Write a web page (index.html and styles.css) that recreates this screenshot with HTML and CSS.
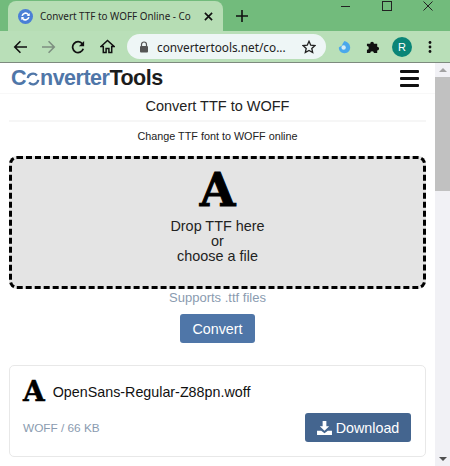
FILE: index.html
```html
<!DOCTYPE html>
<html>
<head>
    <title>Convert TTF to WOFF Online</title>
    <link rel="stylesheet" href="styles.css">
</head>
<body>
    <!-- browser tabs -->
    <div class="tabstrip">
        <div class="tab">
            <svg class="tab-icon" width="15" height="15" viewBox="0 0 16 16">
                <circle cx="8" cy="8" r="8" fill="#4a7fd6"/>
                <path d="M3.6 7.2a4.5 4.5 0 0 1 7.9-2l1-.9v3.2H9.300l1.100-1.100a3 3 0 0 0-5.200 1z" fill="#fff"/>
                <path d="M12.400 8.800a4.500 4.500 0 0 1-7.900 2l-1 .9V8.500h3.200l-1.100 1.100a3 3 0 0 0 5.200-1z" fill="#fff"/>
            </svg>
            <span class="tab-title">Convert TTF to WOFF Online - Co</span>
            <svg class="tab-close" width="9" height="9" viewBox="0 0 10 10">
                <path d="M1 1l8 8M9 1l-8 8" stroke="#111" stroke-width="1.800"/>
            </svg>
        </div>
        <svg class="new-tab" width="12" height="12" viewBox="0 0 12 12">
            <path d="M6 0v12M0 6h12" stroke="#111" stroke-width="1.600"/>
        </svg>
        <div class="window-btns">
            <svg width="10" height="10" viewBox="0 0 10 10"><path d="M0 5.500h9" stroke="#222"/></svg>
            <svg width="10" height="10" viewBox="0 0 10 10"><rect x=".5" y=".5" width="9" height="9" fill="none" stroke="#222"/></svg>
            <svg width="10" height="10" viewBox="0 0 10 10"><path d="M.5 .5l9 9M9.500 .5l-9 9" stroke="#222"/></svg>
        </div>
    </div>

    <!-- browser toolbar -->
    <div class="toolbar">
        <svg class="tool" width="14" height="14" viewBox="0 0 16 16">
            <path d="M16 8H2M8.500 1.500L2 8l6.500 6.500" fill="none" stroke="#111" stroke-width="1.800"/>
        </svg>
        <svg class="tool" width="14" height="14" viewBox="0 0 16 16">
            <path d="M0 8h14M7.500 1.500L14 8l-6.500 6.500" fill="none" stroke="#7d8f80" stroke-width="1.800"/>
        </svg>
        <svg class="tool" width="14" height="14" viewBox="0 0 16 16">
            <path d="M14 10a6.200 6.200 0 1 1-1-5.600" fill="none" stroke="#111" stroke-width="2"/>
            <path d="M15 1v6H9z" fill="#111"/>
        </svg>
        <svg class="tool" width="15" height="15" viewBox="0 0 16 16">
            <path d="M1 8l7-6.500L15 8h-2.500v6.500h-3V10h-3v4.500h-3V8z" fill="none" stroke="#111" stroke-width="1.600"/>
        </svg>
        <div class="omnibox">
            <svg width="10" height="12" viewBox="0 0 10 12">
                <path d="M2.500 5V3.500a2.500 2.500 0 0 1 5 0V5" fill="none" stroke="#555" stroke-width="1.200"/>
                <rect x="1" y="5" width="8" height="6.500" rx="1" fill="#555"/>
            </svg>
            <span class="url">convertertools.net/co...</span>
            <svg class="star" width="14" height="14" viewBox="0 0 16 16">
                <path d="M8 1.500l2 4.400 4.700.5-3.500 3.200 1 4.700L8 11.900l-4.200 2.400 1-4.700L1.300 6.400 6 5.900z" fill="none" stroke="#222" stroke-width="1.500"/>
            </svg>
        </div>
        <svg class="ext-drop" width="13" height="14" viewBox="0 0 14 16">
            <path d="M7 1c4 1 6.500 4 6.500 7.500S11 15 7 15 .5 12 .5 8.500c1-1 2-1.500 3-1.500C4.500 5 5.500 2.500 7 1z" fill="#4aa8ec"/>
            <circle cx="6" cy="8.500" r="2.500" fill="#d4ecf6"/>
        </svg>
        <svg class="ext-puzzle" width="14" height="14" viewBox="0 0 15 15">
            <path d="M1 4h3.500a2 2 0 0 1 4 0H12v3.200a2 2 0 0 1 0 4V14H8.500a2 2 0 0 0-4 0H1v-3.500a2 2 0 0 0 0-4z" fill="#111"/>
        </svg>
        <div class="avatar">R</div>
        <svg class="menu-dots" width="4" height="12" viewBox="0 0 4 12">
            <circle cx="2" cy="1.500" r="1.400" fill="#111"/>
            <circle cx="2" cy="6" r="1.400" fill="#111"/>
            <circle cx="2" cy="10.500" r="1.400" fill="#111"/>
        </svg>
    </div>

    <div class="viewport">
        <div class="page">
            <div class="navbar">
                <div class="logo">
                    <span class="logo-blue">C<svg class="logo-o" width="14" height="14" viewBox="0 0 16 16">
                        <path d="M2 7a6 6 0 0 1 10.500-3" fill="none" stroke="#4f76a8" stroke-width="2.600"/>
                        <path d="M14 9a6 6 0 0 1-10.500 3" fill="none" stroke="#4f76a8" stroke-width="2.600"/>
                    </svg>nverter</span><span class="logo-dark">Tools</span>
                </div>
                <div class="burger"><i></i><i></i><i></i></div>
            </div>

            <h1 class="title">Convert TTF to WOFF</h1>
            <p class="subtitle">Change TTF font to WOFF online</p>

            <div class="dropzone">
                <div class="font-a font-a-big">A</div>
                <div class="drop-text">Drop TTF here</div>
                <div class="drop-text">or</div>
                <div class="drop-text">choose a file</div>
            </div>

            <p class="supports">Supports .ttf files</p>
            <div class="convert-row">
                <button type="button" class="btn btn-convert">Convert</button>
            </div>

            <div class="file-card">
                <div class="file-head">
                    <span class="font-a font-a-small">A</span>
                    <span class="file-name">OpenSans-Regular-Z88pn.woff</span>
                </div>
                <div class="file-foot">
                    <span class="file-meta">WOFF / 66 KB</span>
                    <button type="button" class="btn btn-download">
                        <svg width="15" height="14" viewBox="0 0 16 15">
                            <path d="M6 0h4v5.500h3L8 10.500 3 5.500h3z" fill="#fff"/>
                            <path d="M0 10.500h4.500L8 13l3.500-2.500H16V15H0z" fill="#fff"/>
                        </svg>
                        Download
                    </button>
                </div>
            </div>
        </div>

        <div class="scrollbar">
            <div class="arrow-up"></div>
            <div class="thumb"></div>
            <div class="track"></div>
            <div class="arrow-down"></div>
        </div>
    </div>
</body>
</html>
```

FILE: styles.css
```css
html, body {
    margin: 0;
    padding: 0;
}
body {
    width: 450px;
    height: 466px;
    overflow: hidden;
    font-family: "Liberation Sans", Arial, sans-serif;
    color: #111;
    background-color: #fff;
}

/* browser tabs */
.tabstrip {
    display: flex;
    align-items: flex-end;
    height: 31px;
    padding-left: 8px;
    background-color: #72bb7c;
}
.tab {
    display: flex;
    align-items: center;
    flex: none;
    width: 215px;
    height: 30px;
    padding: 0 10px;
    box-sizing: border-box;
    background-color: #b6ddb4;
    border-radius: 8px 8px 0 0;
}
.tab-icon {
    flex: none;
}
.tab-title {
    flex: 1;
    min-width: 0;
    margin-left: 7px;
    white-space: nowrap;
    font-family: "Noto Sans", sans-serif;
    font-size: 9.9px;
    color: #222;
}
.tab-close {
    flex: none;
}
.new-tab {
    flex: none;
    margin: 0 0 9px 13px;
}
.window-btns {
    display: flex;
    gap: 31px;
    align-self: flex-start;
    margin: 1px 0 0 auto;
    padding-right: 17px;
}

/* browser toolbar */
.toolbar {
    display: flex;
    align-items: center;
    height: 31px;
    padding-left: 13px;
    background-color: #b9dfb8;
    border-bottom: 1px solid #7d8a7e;
}
.tool {
    flex: none;
    margin-right: 15px;
}
.omnibox {
    display: flex;
    align-items: center;
    flex: none;
    width: 199px;
    height: 25px;
    margin-left: -3px;
    padding: 0 10px 0 12px;
    box-sizing: border-box;
    background-color: #eef6f6;
    border-radius: 13px;
}
.url {
    margin-left: 8px;
    font-family: "Noto Sans", sans-serif;
    font-size: 11.8px;
    white-space: nowrap;
    color: #222;
}
.star {
    flex: none;
    margin-left: auto;
}
.ext-drop {
    flex: none;
    margin-left: 12px;
}
.ext-puzzle {
    flex: none;
    margin-left: 15px;
}
.avatar {
    flex: none;
    width: 20px;
    height: 20px;
    margin-left: 12px;
    border-radius: 50%;
    background-color: #0a8577;
    color: #fff;
    font-size: 11px;
    line-height: 20px;
    text-align: center;
}
.menu-dots {
    flex: none;
    margin-left: 16px;
}

/* page */
.viewport {
    display: flex;
    height: 403px;
    overflow: hidden;
}
.page {
    width: 435px;
    flex: none;
    box-sizing: border-box;
    padding: 0 9px;
}
.navbar {
    display: flex;
    align-items: center;
    justify-content: space-between;
    height: 30px;
    margin: 0 -9px;
    padding: 0 16px 0 11px;
    border-bottom: 1px solid #f8f8f8;
}
.logo {
    font-size: 21.5px;
    font-weight: bold;
    letter-spacing: -0.5px;
    white-space: nowrap;
}
.logo-blue {
    color: #4f76a8;
}
.logo-dark {
    color: #1c1c1c;
}
.logo-o {
    margin: 0 0 -1px 0;
}
.burger {
    display: flex;
    flex-direction: column;
    gap: 4px;
    width: 19px;
}
.burger i {
    display: block;
    height: 3px;
    background-color: #111;
    border-radius: 1px;
}
.title {
    margin: 0;
    padding: 3px 0 5px;
    font-size: 14.5px;
    font-weight: normal;
    line-height: 18px;
    text-align: center;
    color: #222;
    border-bottom: 2px solid #f6f6f6;
}
.subtitle {
    margin: 7px 0 13px;
    font-size: 10.8px;
    line-height: 14px;
    text-align: center;
    color: #222;
}
.dropzone {
    height: 133px;
    box-sizing: border-box;
    padding-top: 5px;
    background-color: #e4e4e4;
    border: 3px dashed #000;
    border-radius: 8px;
    text-align: center;
}
.font-a {
    font-family: "DejaVu Serif", "Liberation Serif", serif;
    font-weight: 900;
    color: #000;
}
.font-a-big {
    font-size: 46px;
    line-height: 53px;
    -webkit-text-stroke: 1px #000;
    margin-bottom: 2px;
}
.drop-text {
    font-size: 14.4px;
    line-height: 15px;
    color: #222;
}
.supports {
    margin: 0;
    font-size: 13px;
    line-height: 18px;
    text-align: center;
    color: #8a9bb0;
}
.convert-row {
    display: flex;
    justify-content: center;
    margin-top: 7px;
}
.btn {
    display: flex;
    align-items: center;
    justify-content: center;
    height: 29px;
    padding: 0;
    border: 0;
    border-radius: 3px;
    font-family: "Liberation Sans", Arial, sans-serif;
    font-size: 14.3px;
    color: #fff;
}
.btn-convert {
    width: 75px;
    background-color: #4f76a8;
}
.btn-download {
    gap: 4px;
    width: 106px;
    background-color: #44658f;
}
.file-card {
    height: 92px;
    margin-top: 22px;
    box-sizing: border-box;
    padding: 13px 14px 0 13px;
    border: 1px solid #e8e8e8;
    border-radius: 5px;
}
.file-head {
    display: flex;
    align-items: center;
    gap: 8px;
    height: 26px;
}
.font-a-small {
    font-size: 28px;
    line-height: 26px;
    -webkit-text-stroke: 0.5px #000;
}
.file-name {
    font-size: 14.3px;
    color: #111;
}
.file-foot {
    display: flex;
    align-items: center;
    justify-content: space-between;
    margin-top: 8px;
}
.file-meta {
    font-size: 11.8px;
    color: #8a9bb0;
}

/* page scrollbar */
.scrollbar {
    display: flex;
    flex-direction: column;
    flex: 1;
    background-color: #f1f1f5;
}
.arrow-up {
    width: 0;
    height: 0;
    margin: 5px auto 5px;
    border-left: 4px solid transparent;
    border-right: 4px solid transparent;
    border-bottom: 4px solid #a3a3a3;
}
.thumb {
    height: 114px;
    background-color: #c1c1c1;
}
.track {
    flex: 1;
}
.arrow-down {
    width: 0;
    height: 0;
    margin: 0 auto 5px;
    border-left: 4px solid transparent;
    border-right: 4px solid transparent;
    border-top: 4px solid #505050;
}
```
